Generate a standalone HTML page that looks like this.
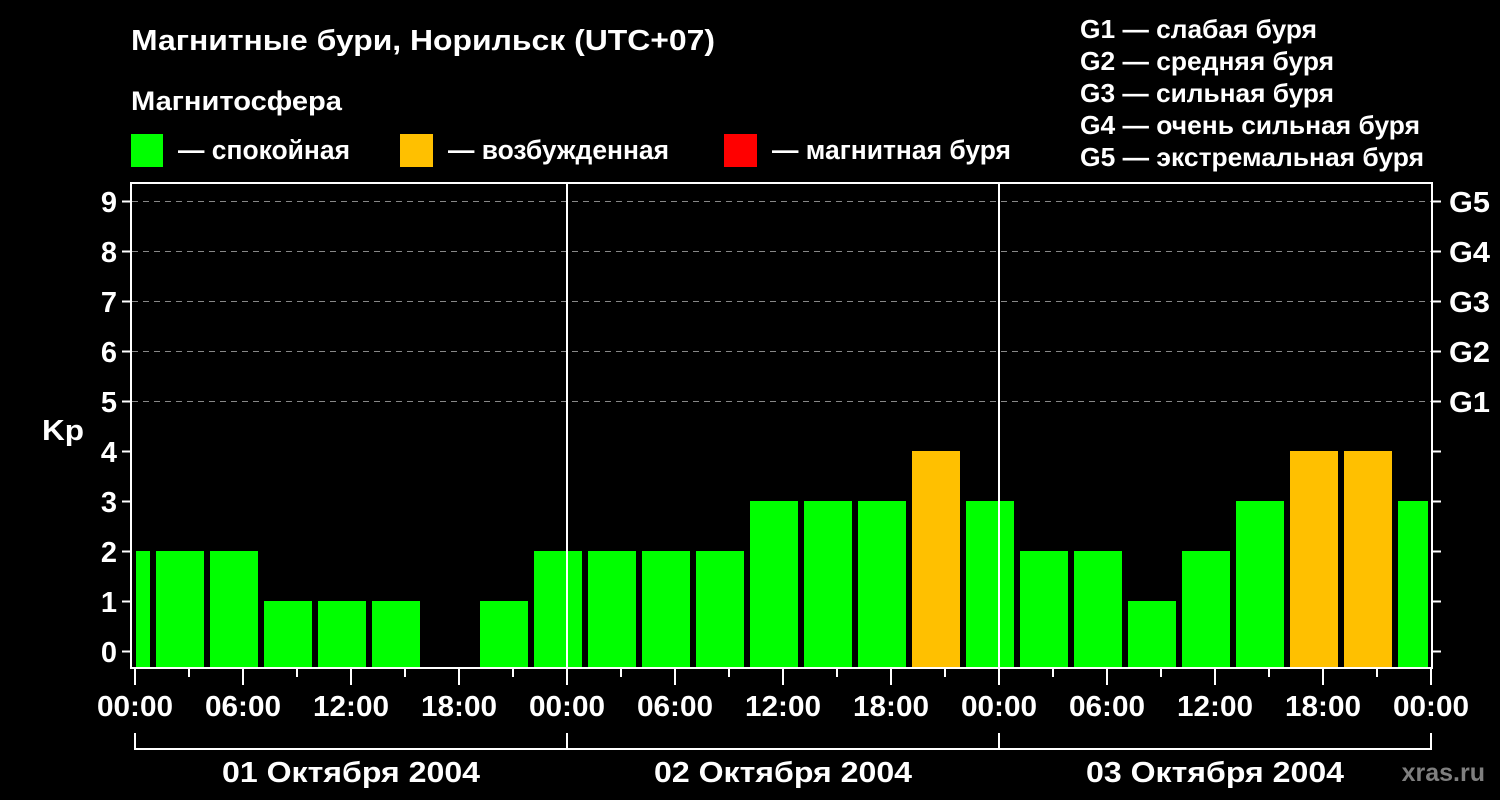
<!DOCTYPE html>
<html><head><meta charset="utf-8"><style>
html,body{margin:0;padding:0;background:#000;width:1500px;height:800px;overflow:hidden}
svg{display:block}
text{font-family:"Liberation Sans",sans-serif;font-weight:bold;fill:#fff}
</style></head><body>
<svg width="1500" height="800" xmlns="http://www.w3.org/2000/svg">
<text x="131" y="50" font-size="29" textLength="584" lengthAdjust="spacingAndGlyphs">Магнитные бури, Норильск (UTC+07)</text>
<text x="131" y="110" font-size="27" textLength="211" lengthAdjust="spacingAndGlyphs">Магнитосфера</text>
<rect x="131" y="134" width="32" height="33" fill="#00ff00"/>
<text x="178" y="159" font-size="27" textLength="172" lengthAdjust="spacingAndGlyphs">— спокойная</text>
<rect x="400" y="134" width="33" height="33" fill="#ffc000"/>
<text x="448" y="159" font-size="27" textLength="221" lengthAdjust="spacingAndGlyphs">— возбужденная</text>
<rect x="724" y="134" width="33" height="33" fill="#ff0000"/>
<text x="772" y="159" font-size="27" textLength="239" lengthAdjust="spacingAndGlyphs">— магнитная буря</text>
<g font-size="26">
<text x="1080" y="38" textLength="237" lengthAdjust="spacingAndGlyphs">G1 — слабая буря</text>
<text x="1080" y="70" textLength="254" lengthAdjust="spacingAndGlyphs">G2 — средняя буря</text>
<text x="1080" y="102" textLength="254" lengthAdjust="spacingAndGlyphs">G3 — сильная буря</text>
<text x="1080" y="134" textLength="340" lengthAdjust="spacingAndGlyphs">G4 — очень сильная буря</text>
<text x="1080" y="166" textLength="344" lengthAdjust="spacingAndGlyphs">G5 — экстремальная буря</text>
</g>
<g stroke="#888" stroke-width="1" stroke-dasharray="6,5">
<line x1="132" y1="201.5" x2="1431" y2="201.5"/>
<line x1="132" y1="251.5" x2="1431" y2="251.5"/>
<line x1="132" y1="301.5" x2="1431" y2="301.5"/>
<line x1="132" y1="351.5" x2="1431" y2="351.5"/>
<line x1="132" y1="401.5" x2="1431" y2="401.5"/>
</g>
<g fill="#00ff00">
<rect x="136" y="551" width="14" height="116"/>
<rect x="156" y="551" width="48" height="116"/>
<rect x="210" y="551" width="48" height="116"/>
<rect x="264" y="601" width="48" height="66"/>
<rect x="318" y="601" width="48" height="66"/>
<rect x="372" y="601" width="48" height="66"/>
<rect x="480" y="601" width="48" height="66"/>
<rect x="534" y="551" width="48" height="116"/>
<rect x="588" y="551" width="48" height="116"/>
<rect x="642" y="551" width="48" height="116"/>
<rect x="696" y="551" width="48" height="116"/>
<rect x="750" y="501" width="48" height="166"/>
<rect x="804" y="501" width="48" height="166"/>
<rect x="858" y="501" width="48" height="166"/>
<rect x="966" y="501" width="48" height="166"/>
<rect x="1020" y="551" width="48" height="116"/>
<rect x="1074" y="551" width="48" height="116"/>
<rect x="1128" y="601" width="48" height="66"/>
<rect x="1182" y="551" width="48" height="116"/>
<rect x="1236" y="501" width="48" height="166"/>
<rect x="1398" y="501" width="30" height="166"/>
</g>
<g fill="#ffc000">
<rect x="912" y="451" width="48" height="216"/>
<rect x="1290" y="451" width="48" height="216"/>
<rect x="1344" y="451" width="48" height="216"/>
</g>
<g stroke="#fff" stroke-width="2" fill="none">
<rect x="131" y="183" width="1301" height="485"/>
<line x1="567" y1="183" x2="567" y2="668"/>
<line x1="999" y1="183" x2="999" y2="668"/>
<path d="M122 201.5h9M122 251.5h9M122 301.5h9M122 351.5h9M122 401.5h9M122 451.5h9M122 501.5h9M122 551.5h9M122 601.5h9M122 651.5h9"/>
<path d="M1432 201.5h9M1432 251.5h9M1432 301.5h9M1432 351.5h9M1432 401.5h9M1432 451.5h9M1432 501.5h9M1432 551.5h9M1432 601.5h9M1432 651.5h9"/>
<path d="M135 668v17M189 668v9M243 668v17M297 668v9M351 668v17M405 668v9M459 668v17M513 668v9M567 668v17M621 668v9M675 668v17M729 668v9M783 668v17M837 668v9M891 668v17M945 668v9M999 668v17M1053 668v9M1107 668v17M1161 668v9M1215 668v17M1269 668v9M1323 668v17M1377 668v9M1431 668v17"/>
<path d="M135 733v16H1431V733M567 733v16M999 733v16"/>
</g>
<g font-size="29" text-anchor="end">
<text x="117" y="212">9</text><text x="117" y="262">8</text><text x="117" y="312">7</text><text x="117" y="362">6</text><text x="117" y="412">5</text><text x="117" y="462">4</text><text x="117" y="512">3</text><text x="117" y="562">2</text><text x="117" y="612">1</text><text x="117" y="662">0</text>
</g>
<text x="42" y="440" font-size="29" textLength="42" lengthAdjust="spacingAndGlyphs">Kp</text>
<g font-size="29">
<text x="1449" y="212" textLength="41" lengthAdjust="spacingAndGlyphs">G5</text><text x="1449" y="262" textLength="41" lengthAdjust="spacingAndGlyphs">G4</text><text x="1449" y="312" textLength="41" lengthAdjust="spacingAndGlyphs">G3</text><text x="1449" y="362" textLength="41" lengthAdjust="spacingAndGlyphs">G2</text><text x="1449" y="412" textLength="41" lengthAdjust="spacingAndGlyphs">G1</text>
</g>
<g font-size="29" text-anchor="middle">
<text x="135" y="716" textLength="76" lengthAdjust="spacingAndGlyphs">00:00</text><text x="243" y="716" textLength="76" lengthAdjust="spacingAndGlyphs">06:00</text><text x="351" y="716" textLength="76" lengthAdjust="spacingAndGlyphs">12:00</text><text x="459" y="716" textLength="76" lengthAdjust="spacingAndGlyphs">18:00</text>
<text x="567" y="716" textLength="76" lengthAdjust="spacingAndGlyphs">00:00</text><text x="675" y="716" textLength="76" lengthAdjust="spacingAndGlyphs">06:00</text><text x="783" y="716" textLength="76" lengthAdjust="spacingAndGlyphs">12:00</text><text x="891" y="716" textLength="76" lengthAdjust="spacingAndGlyphs">18:00</text>
<text x="999" y="716" textLength="76" lengthAdjust="spacingAndGlyphs">00:00</text><text x="1107" y="716" textLength="76" lengthAdjust="spacingAndGlyphs">06:00</text><text x="1215" y="716" textLength="76" lengthAdjust="spacingAndGlyphs">12:00</text><text x="1323" y="716" textLength="76" lengthAdjust="spacingAndGlyphs">18:00</text><text x="1431" y="716" textLength="76" lengthAdjust="spacingAndGlyphs">00:00</text>
<text x="351" y="782" textLength="258" lengthAdjust="spacingAndGlyphs">01 Октября 2004</text>
<text x="783" y="782" textLength="258" lengthAdjust="spacingAndGlyphs">02 Октября 2004</text>
<text x="1215" y="782" textLength="258" lengthAdjust="spacingAndGlyphs">03 Октября 2004</text>
</g>
<text x="1485" y="781" font-size="25" text-anchor="end" style="fill:#7f7f7f">xras.ru</text>
</svg>
</body></html>
